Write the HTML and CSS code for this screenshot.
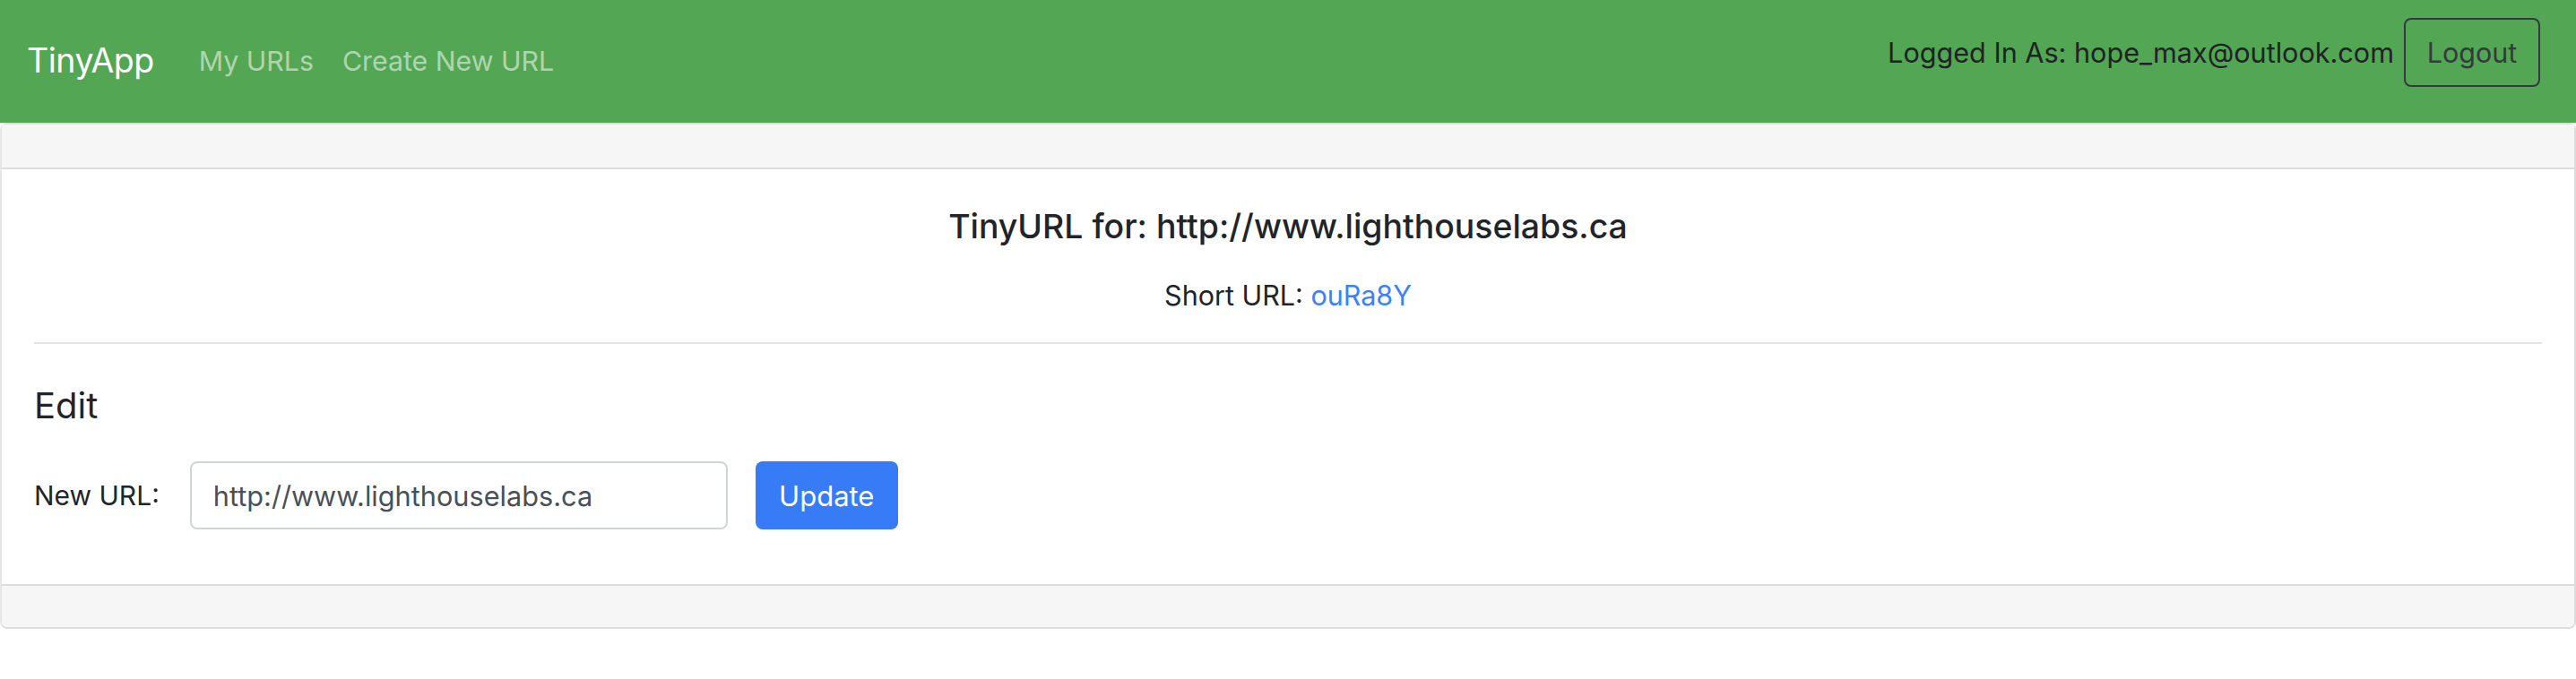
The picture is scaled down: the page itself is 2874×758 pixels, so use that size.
FILE: index.html
```html
<!DOCTYPE html>
<html lang="en">
<head>
<meta charset="utf-8">
<title>TinyApp</title>
<link rel="stylesheet" href="styles.css">
</head>
<body>
<nav class="navbar">
  <div class="nav-left">
    <a class="brand" href="#">TinyApp</a>
    <a class="nav-link" href="#">My URLs</a>
    <a class="nav-link" href="#">Create New URL</a>
  </div>
  <div class="nav-right">
    <span class="logged">Logged In As: hope_max@outlook.com</span>
    <button class="btn-logout" type="button">Logout</button>
  </div>
</nav>
<main class="card">
  <div class="card-header"></div>
  <div class="card-body">
    <h5 class="title">TinyURL for: http://www.lighthouselabs.ca</h5>
    <p class="short">Short URL: <a href="#">ouRa8Y</a></p>
    <hr class="divider">
    <h4 class="edit-title">Edit</h4>
    <form class="edit-form">
      <label class="label" for="newurl">New URL:</label>
      <input class="input" id="newurl" type="text" value="http://www.lighthouselabs.ca">
      <button class="btn-update" type="button">Update</button>
    </form>
  </div>
  <div class="card-footer"></div>
</main>
</body>
</html>
```

FILE: styles.css
```css
* { box-sizing: border-box; }
html, body { margin: 0; padding: 0; background: #ffffff; }
body {
  font-family: Inter, "Noto Sans", "Liberation Sans", sans-serif;
  font-size: 30.5px;
  color: #212529;
  line-height: 1.5;
}
.navbar {
  height: 137px;
  background: #53a653;
  display: flex;
  align-items: center;
  justify-content: space-between;
  padding: 0 40px 0 30px;
}
.nav-left { display: flex; align-items: center; }
.brand {
  font-size: 37.5px;
  color: #ffffff;
  text-decoration: none;
  margin-right: 34px;
  letter-spacing: -0.5px;
}
.nav-link {
  color: rgba(255,255,255,0.55);
  text-decoration: none;
  padding: 0 16px;
  font-size: 30.3px;
}
.nav-right { display: flex; align-items: center; margin-bottom: 20px; }
.logged { color: #1f2326; margin-right: 11px; font-size: 30.6px; }
.btn-logout {
  font-family: inherit;
  font-size: 30.5px;
  color: #343a40;
  background: transparent;
  border: 2px solid #343a40;
  border-radius: 8px;
  height: 77px;
  width: 152px;
  padding: 0;
}
.card {
  display: flex;
  flex-direction: column;
  border: 2px solid #dcdcdc;
  border-left-color: #e6e6e6;
  border-radius: 8px;
}
.card-header {
  height: 50px;
  background: #f6f6f6;
  border-bottom: 2px solid #dcdcdc;
}
.card-body {
  padding: 40px 36px 38px;
}
.title {
  margin: 0 0 29px;
  text-align: center;
  font-size: 37.4px;
  font-weight: 500;
  line-height: 48px;
}
.short {
  margin: 0;
  text-align: center;
  line-height: 48px;
}
.short a { color: #3c82f6; text-decoration: none; }
.divider {
  margin: 28px 0 0;
  border: 0;
  border-top: 2px solid #e3e3e3;
}
.edit-title {
  margin: 45px 0 38px;
  font-size: 40px;
  font-weight: 400;
  line-height: 48px;
}
.edit-form {
  display: flex;
  align-items: center;
  margin-bottom: 23px;
}
.label { margin-right: 34px; font-size: 30px; }
.input {
  font-family: inherit;
  font-size: 30.7px;
  color: #495057;
  width: 600px;
  height: 76px;
  padding: 0 24px;
  border: 2px solid #ced4da;
  border-radius: 8px;
  margin-right: 31px;
}
.btn-update {
  font-family: inherit;
  font-size: 31px;
  color: #ffffff;
  background: #377bf6;
  border: 0;
  border-radius: 8px;
  width: 159px;
  height: 76px;
}
.card-footer {
  height: 48px;
  background: #f6f6f6;
  border-top: 2px solid #dcdcdc;
  border-radius: 0 0 6px 6px;
}
```
